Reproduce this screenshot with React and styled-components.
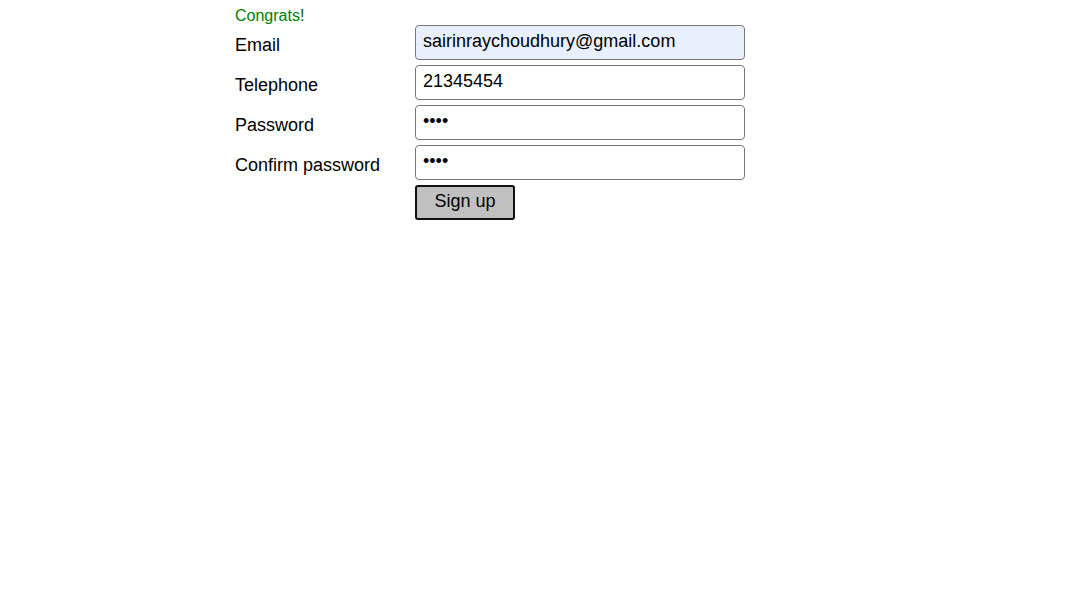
import React from "react";
import styled, { createGlobalStyle } from "styled-components";

const GlobalStyle = createGlobalStyle`
  body {
    margin: 0;
    background: #fff;
    font-family: Arial, "Liberation Sans", sans-serif;
    color: #000;
  }
`;

const Page = styled.div`
  width: 510px;
  margin-left: 235px;
  padding-top: 6px;
`;

const Message = styled.div`
  font-size: 16px;
  line-height: 19px;
  color: #008000;
  span {
    color: #005a00;
  }
`;

const Form = styled.form`
  display: grid;
  grid-template-columns: 180px 330px;
  row-gap: 5px;
`;

const Label = styled.label`
  font-size: 18px;
  line-height: 22px;
  padding-top: 9px;
`;

const Input = styled.input`
  box-sizing: border-box;
  width: 330px;
  height: 35px;
  margin: 0;
  padding: 0 7px 3px;
  font-family: Arial, "Liberation Sans", sans-serif;
  font-size: 18px;
  color: #000;
  border: 1px solid #767676;
  border-radius: 4px;
  background: ${(p) => (p.$filled ? "#e8f0fe" : "#fff")};
  outline: none;
`;

const Button = styled.button`
  grid-column: 2;
  box-sizing: border-box;
  width: 100px;
  height: 35px;
  margin: 0;
  padding: 0 0 2px;
  font-family: Arial, "Liberation Sans", sans-serif;
  font-size: 18px;
  color: #000;
  background: #c0c0c0;
  border: 2px solid #111;
  border-radius: 3px;
  cursor: pointer;
`;

const fields = [
  { label: "Email", type: "email", value: "sairinraychoudhury@gmail.com", filled: true },
  { label: "Telephone", type: "tel", value: "21345454" },
  { label: "Password", type: "password", value: "abcd" },
  { label: "Confirm password", type: "password", value: "abcd" },
];

export default function App() {
  return (
    <>
      <GlobalStyle />
      <Page>
        <Message>
          Congrats<span>!</span>
        </Message>
        <Form onSubmit={(e) => e.preventDefault()}>
          {fields.map((f) => (
            <React.Fragment key={f.label}>
              <Label>{f.label}</Label>
              <Input type={f.type} defaultValue={f.value} $filled={f.filled} />
            </React.Fragment>
          ))}
          <Button type="submit">Sign up</Button>
        </Form>
      </Page>
    </>
  );
}
